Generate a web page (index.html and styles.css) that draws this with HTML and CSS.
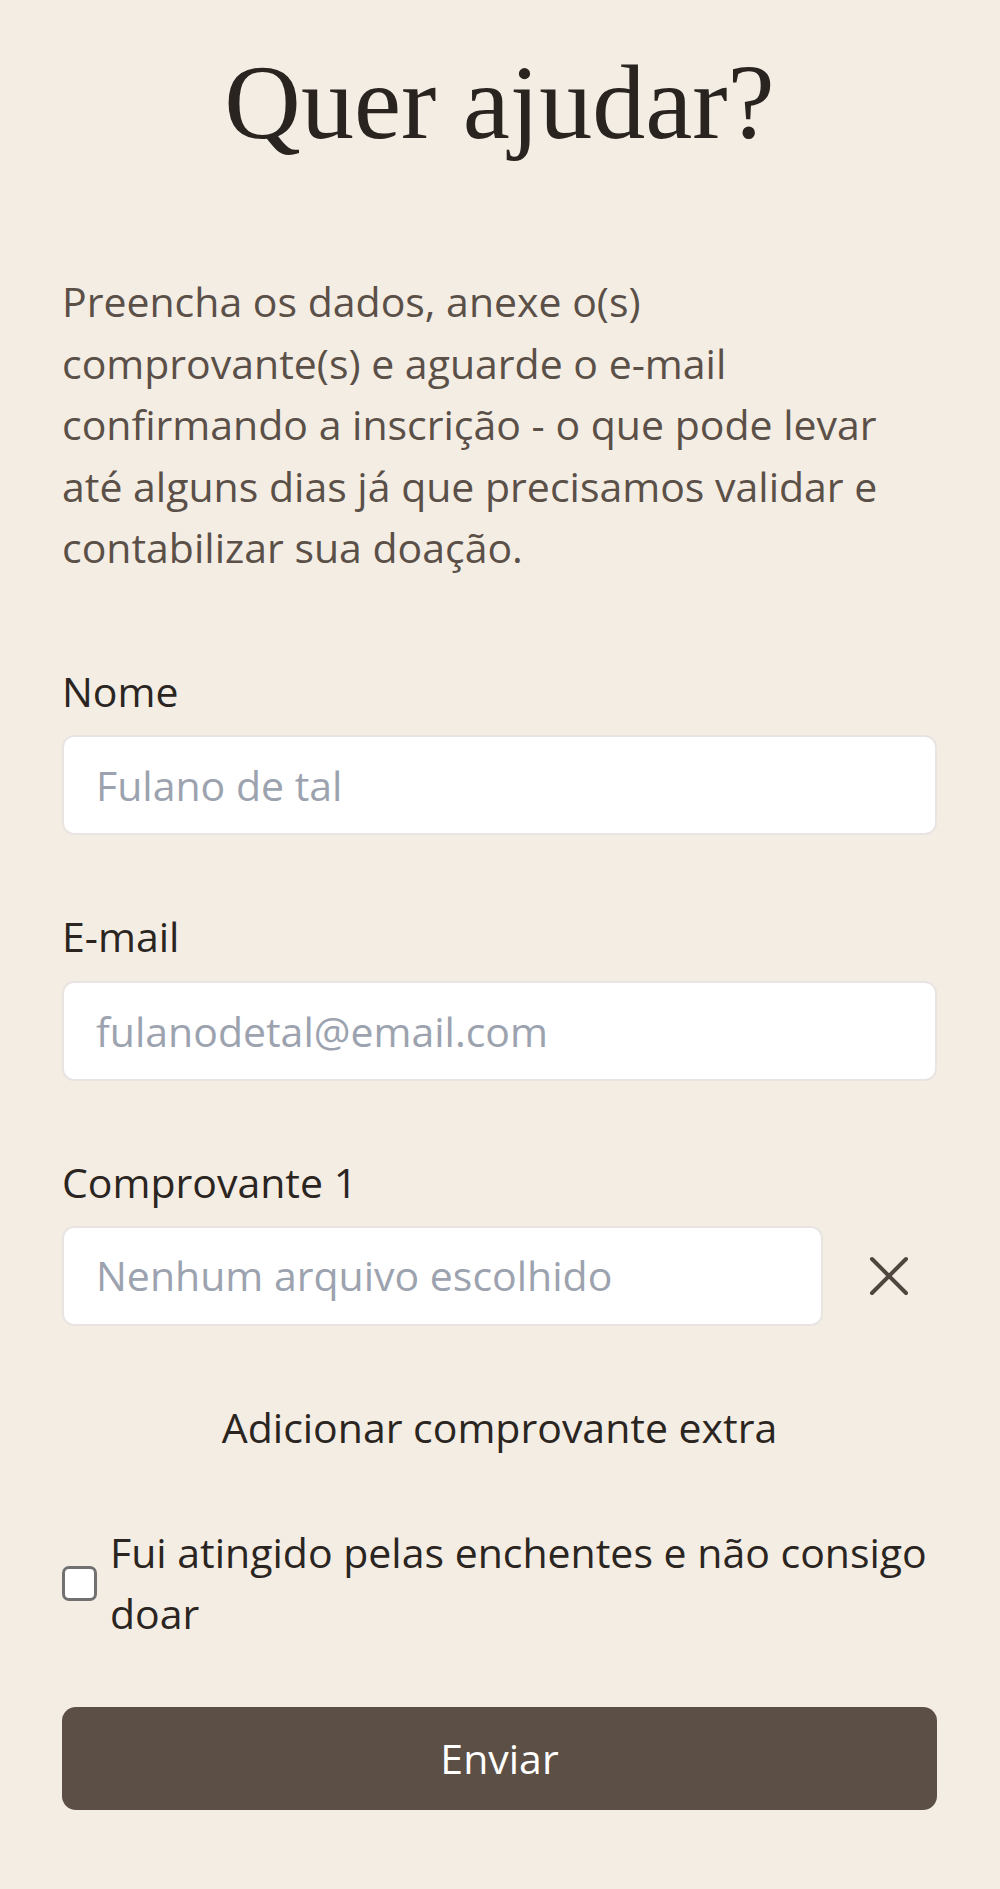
FILE: index.html
```html
<!DOCTYPE html>
<html lang="pt-BR">
<head>
  <meta charset="UTF-8">
  <meta name="viewport" content="width=device-width, initial-scale=1.0">
  <title>Quer ajudar?</title>
  <link rel="stylesheet" href="styles.css">
</head>
<body>
  <main class="page">
    <h1 class="title">Quer ajudar?</h1>

    <p class="intro">Preencha os dados, anexe o(s) comprovante(s) e aguarde o e-mail confirmando a inscrição - o que pode levar até alguns dias já que precisamos validar e contabilizar sua doação.</p>

    <form class="form">
      <div class="field">
        <label class="label" for="nome">Nome</label>
        <input class="input" id="nome" type="text" placeholder="Fulano de tal">
      </div>

      <div class="field">
        <label class="label" for="email">E-mail</label>
        <input class="input" id="email" type="email" placeholder="fulanodetal@email.com">
      </div>

      <div class="field">
        <label class="label" for="comp1">Comprovante 1</label>
        <div class="file-row">
          <label class="input file-input">
            <input id="comp1" type="file" hidden>
            <span>Nenhum arquivo escolhido</span>
          </label>
          <button type="button" class="remove" aria-label="Remover">
            <svg width="40" height="40" viewBox="0 0 40 40">
              <path d="M3 3 L37 37 M37 3 L3 37" stroke="#4e463f" stroke-width="4" stroke-linecap="round" fill="none"/>
            </svg>
          </button>
        </div>
      </div>

      <button type="button" class="add-extra">Adicionar comprovante extra</button>

      <label class="check">
        <input type="checkbox" class="checkbox">
        <span>Fui atingido pelas enchentes e não consigo doar</span>
      </label>

      <button type="submit" class="submit">Enviar</button>
    </form>
  </main>
</body>
</html>
```

FILE: styles.css
```css
* {
  margin: 0;
  padding: 0;
  box-sizing: border-box;
}

body {
  background: #f4ede4;
  font-family: 'Open Sans', sans-serif;
  font-size: 41px;
  line-height: 61.5px;
  color: #2b2521;
}

.page {
  padding: 40px 63px 78px 62px;
}

.title {
  font-family: 'Liberation Serif', serif;
  font-weight: 400;
  font-size: 106px;
  line-height: 125px;
  text-align: center;
  color: #2a2420;
}

.intro {
  margin-top: 106px;
  color: #5b5048;
}

.form {
  display: flex;
  flex-direction: column;
  margin-top: 82px;
}

.field {
  display: flex;
  flex-direction: column;
  gap: 13px;
  margin-bottom: 71px;
}

.label {
  display: block;
}

.input {
  display: flex;
  align-items: center;
  width: 100%;
  height: 100px;
  padding: 0 32px;
  background: #fff;
  border: 2px solid #e8e4e2;
  border-radius: 12px;
  font-family: inherit;
  font-size: 41px;
  color: #2b2521;
  outline: none;
}

.input::placeholder,
.file-input span {
  color: #9ca3af;
}

.file-row {
  display: flex;
  align-items: center;
}

.file-input {
  flex: 1;
  cursor: pointer;
}

.remove {
  width: 96px;
  height: 100px;
  margin-left: 18px;
  display: flex;
  align-items: center;
  justify-content: center;
  background: none;
  border: none;
  cursor: pointer;
}

.add-extra {
  background: none;
  border: none;
  font-family: inherit;
  font-size: 41px;
  line-height: 61.5px;
  color: #2b2521;
  cursor: pointer;
}

.check {
  display: flex;
  align-items: center;
  gap: 13px;
  margin-top: 63px;
}

.checkbox {
  appearance: none;
  flex: none;
  width: 35px;
  height: 35px;
  background: #fff;
  border: 3px solid #717171;
  border-radius: 7px;
}

.submit {
  margin-top: 62px;
  height: 103px;
  background: #5c4f45;
  border: none;
  border-radius: 14px;
  font-family: inherit;
  font-size: 41px;
  color: #fff;
  cursor: pointer;
}
```
